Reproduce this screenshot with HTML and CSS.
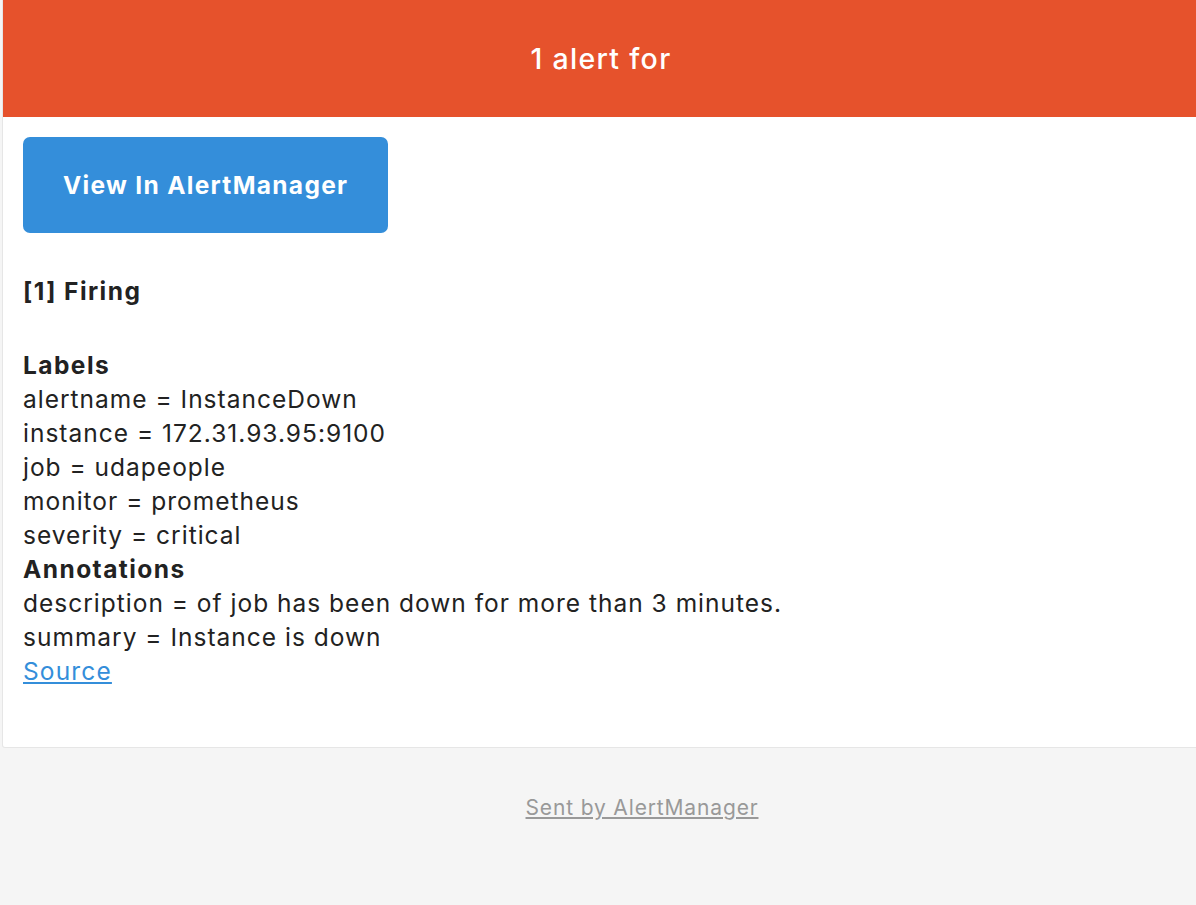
FILE: index.html
```html
<!DOCTYPE html>
<html>
<head>
<meta charset="utf-8">
<title>Alert</title>
<link rel="stylesheet" href="styles.css">
</head>
<body>
<div class="page">
  <div class="main">
    <div class="alert-header">1 alert for</div>
    <div class="content">
      <div class="block">
        <a class="btn-primary" href="#">View In AlertManager</a>
      </div>
      <div class="block">
        <strong>[1] Firing</strong>
      </div>
      <div class="block">
        <strong>Labels</strong><br>
        alertname = InstanceDown<br>
        instance = 172.31.93.95:9100<br>
        job = udapeople<br>
        monitor = prometheus<br>
        severity = critical<br>
        <strong>Annotations</strong><br>
        description = of job has been down for more than 3 minutes.<br>
        summary = Instance is down<br>
        <a class="source" href="#">Source</a>
      </div>
    </div>
  </div>
  <div class="footer">
    <a href="#">Sent by AlertManager</a>
  </div>
</div>
</body>
</html>
```
FILE: styles.css
```css
html, body {
  margin: 0;
  padding: 0;
  background: #f5f5f5;
  overflow: hidden;
}
body {
  font-family: Inter, "Liberation Sans", Arial, sans-serif;
  color: #222;
  font-size: 24.5px;
  line-height: 34px;
  letter-spacing: 1px;
}
strong {
  letter-spacing: 1.45px;
}
.page {
  padding-left: 2px;
  width: 1200px;
}
.main {
  background: #fff;
  border: 1px solid #e6e6e6;
  border-top: none;
  border-radius: 0 0 3px 3px;
  width: 1196px;
}
.alert-header {
  background: #e6522c;
  color: #fff;
  text-align: center;
  font-size: 28.5px;
  font-weight: 500;
  letter-spacing: 1.3px;
  height: 117px;
  line-height: 117px;
}
.content {
  padding: 20px 20px 19px;
}
.block {
  padding-bottom: 40px;
}
.block:first-child {
  padding-bottom: 41px;
}
.btn-primary {
  display: inline-block;
  background: #348eda;
  color: #fff;
  font-weight: bold;
  text-decoration: none;
  border-radius: 7px;
  height: 96px;
  line-height: 96px;
  padding: 0 40px;
  font-size: 24.5px;
  letter-spacing: 1.3px;
}
.source {
  color: #348eda;
  letter-spacing: 1.15px;
}
.footer {
  padding: 43px 0 0 80px;
  text-align: center;
  font-size: 21px;
  line-height: 34px;
  letter-spacing: 0.85px;
}
.footer a {
  color: #999;
}
```
